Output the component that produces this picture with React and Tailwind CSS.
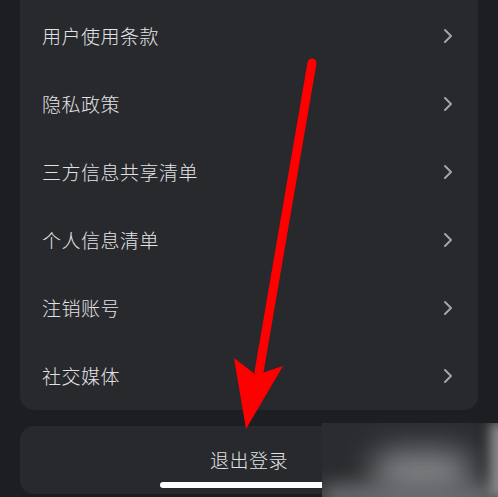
import React from 'react'

const items = ['用户使用条款', '隐私政策', '三方信息共享清单', '个人信息清单', '注销账号', '社交媒体']

function Chevron() {
  return (
    <svg width="10" height="16" viewBox="0 0 10 16" fill="none">
      <path d="M2 2 L8 8 L2 14" stroke="#a3a4a8" strokeWidth="2" strokeLinecap="round" strokeLinejoin="round" />
    </svg>
  )
}

export default function App() {
  return (
    <div className="relative w-[498px] h-[497px] overflow-hidden bg-[#1d1e21]" style={{ fontFamily: '"Noto Sans CJK SC", "Noto Sans", sans-serif' }}>
      <div className="px-[20px]">
        <div className="bg-[#28292d] rounded-b-[14px] pt-[2px]">
          {items.map((t) => (
            <div key={t} className="h-[68px] flex items-center justify-between pl-[22px] pr-[25px]">
              <span className="text-[19px] font-light text-[#e2e3e6] tracking-[0.5px]">{t}</span>
              <Chevron />
            </div>
          ))}
        </div>
        <div className="mt-[16px] h-[68px] bg-[#28292d] rounded-[14px] flex items-center justify-center">
          <span className="text-[19px] font-light text-[#e2e3e6] tracking-[0.5px]">退出登录</span>
        </div>
      </div>

      {/* home indicator */}
      <div className="absolute left-[160px] top-[482px] w-[178px] h-[6px] rounded-full bg-white" />

      {/* blurred watermark */}
      <div className="absolute left-[322px] top-[423px] w-[176px] h-[74px] bg-[#2b2c2f] overflow-hidden">
        <div className="absolute left-[50px] top-[28px] w-[100px] h-[44px] rounded-full bg-[#85868a] blur-[16px]" />
        <div className="absolute left-[0px] top-[62px] w-[176px] h-[24px] bg-[#6f7073] blur-[10px]" />
        <div className="absolute right-[-12px] top-[0px] w-[20px] h-[74px] bg-[#8a8b8d] blur-[6px]" />
      </div>

      {/* red arrow */}
      <svg className="absolute inset-0" width="498" height="497" viewBox="0 0 498 497">
        <line x1="312" y1="63" x2="259" y2="372" stroke="#ff0000" strokeWidth="9" strokeLinecap="round" />
        <polygon points="234,358 256,375 283,366 246,429" fill="#ff0000" />
      </svg>
    </div>
  )
}
